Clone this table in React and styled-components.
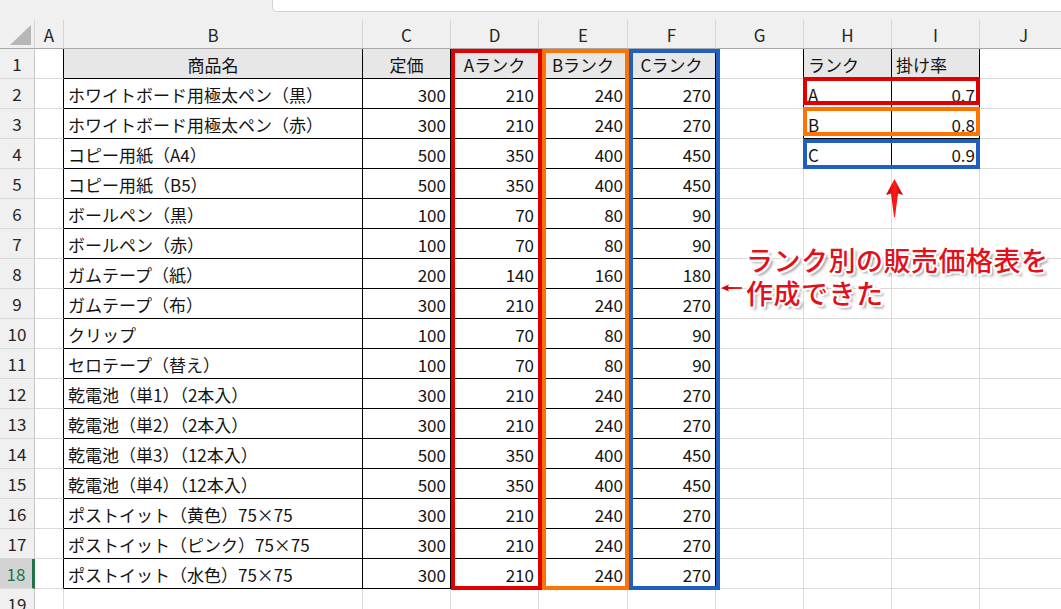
import React from 'react';
import styled, { createGlobalStyle } from 'styled-components';

const Global = createGlobalStyle`
  html, body { margin: 0; padding: 0; background: #fff; overflow: hidden; }
  body { font-family: "Noto Sans CJK JP", "Noto Sans", sans-serif; }
`;

const COLS = [29, 299, 88, 88, 89, 88, 88, 88, 88, 88];
const LETTERS = ['A', 'B', 'C', 'D', 'E', 'F', 'G', 'H', 'I', 'J'];

const ITEMS = [
  ['ホワイトボード用極太ペン（黒）', 300, 210, 240, 270],
  ['ホワイトボード用極太ペン（赤）', 300, 210, 240, 270],
  ['コピー用紙（A4）', 500, 350, 400, 450],
  ['コピー用紙（B5）', 500, 350, 400, 450],
  ['ボールペン（黒）', 100, 70, 80, 90],
  ['ボールペン（赤）', 100, 70, 80, 90],
  ['ガムテープ（紙）', 200, 140, 160, 180],
  ['ガムテープ（布）', 300, 210, 240, 270],
  ['クリップ', 100, 70, 80, 90],
  ['セロテープ（替え）', 100, 70, 80, 90],
  ['乾電池（単1）（2本入）', 300, 210, 240, 270],
  ['乾電池（単2）（2本入）', 300, 210, 240, 270],
  ['乾電池（単3）（12本入）', 500, 350, 400, 450],
  ['乾電池（単4）（12本入）', 500, 350, 400, 450],
  ['ポストイット（黄色）75×75', 300, 210, 240, 270],
  ['ポストイット（ピンク）75×75', 300, 210, 240, 270],
  ['ポストイット（水色）75×75', 300, 210, 240, 270],
];

const RATES = [['A', '0.7'], ['B', '0.8'], ['C', '0.9']];

const Page = styled.div`
  position: relative;
  width: 1061px;
  height: 609px;
  overflow: hidden;
  background: #fff;
`;

const TopBar = styled.div`
  height: 20px;
  background: #f0f0f0;
  display: flex;
  justify-content: flex-end;
  align-items: flex-start;
`;

const FormulaBox = styled.div`
  width: 789px;
  height: 12px;
  box-sizing: border-box;
  background: #fff;
  border-left: 1px solid #d2d2d2;
  border-bottom: 1px solid #d2d2d2;
  border-bottom-left-radius: 5px;
`;

const Grid = styled.div`
  display: grid;
  grid-template-columns: 35px ${COLS.map((c) => c + 'px').join(' ')};
  grid-template-rows: 29px repeat(19, 30px);
  font-size: 17px;
  color: #141414;
`;

const Corner = styled.div`
  background: #f0f0f0;
  border-right: 1px solid #d6d6d6;
  border-bottom: 1px solid #a8a8a8;
  display: flex;
  justify-content: flex-end;
  align-items: flex-end;
  padding: 0 3px 3px 0;
`;

const CornerTriangle = styled.div`
  width: 21px;
  height: 20px;
  background: #b7b7b7;
  clip-path: polygon(100% 0, 100% 100%, 0 100%);
`;

const ColHeader = styled.div`
  background: #f0f0f0;
  border-right: 1px solid #d6d6d6;
  border-bottom: 1px solid #a8a8a8;
  display: flex;
  align-items: center;
  justify-content: center;
  color: #262626;
`;

const RowHeader = styled.div`
  background: ${(p) => (p.$selected ? '#d3d3d3' : '#f0f0f0')};
  border-right: ${(p) => (p.$selected ? '3px solid #217346' : '1px solid #c8c8c8')};
  border-bottom: 1px solid #d8d8d8;
  display: flex;
  align-items: center;
  justify-content: center;
  color: ${(p) => (p.$selected ? '#217346' : '#262626')};
`;

const Cell = styled.div`
  background: ${(p) => (p.$head ? '#e7e7e7' : '#fff')};
  border-right: 1px solid ${(p) => (p.$rightDark ? '#000' : '#dadada')};
  border-bottom: 1px solid ${(p) => (p.$bottomDark ? '#000' : '#dadada')};
  display: flex;
  align-items: center;
  justify-content: ${(p) =>
    p.$align === 'right' ? 'flex-end' : p.$align === 'center' ? 'center' : 'flex-start'};
  padding: 1px 4px 0 4px;
  white-space: nowrap;
  overflow: hidden;
`;

const RankBox = styled.div`
  position: absolute;
  left: ${(p) => p.$x}px;
  top: ${(p) => p.$y}px;
  width: ${(p) => p.$w}px;
  height: ${(p) => p.$h}px;
  box-sizing: border-box;
  border: 4px solid ${(p) => p.$color};
  pointer-events: none;
`;

const Note = styled.div`
  position: absolute;
  left: 746px;
  top: 243px;
  font-size: 27px;
  line-height: 33px;
  letter-spacing: 0.5px;
  font-weight: 500;
  color: #e3101c;
  text-shadow: 2px 0 #fff, -2px 0 #fff, 0 2px #fff, 0 -2px #fff,
    1.5px 1.5px #fff, -1.5px -1.5px #fff, 1.5px -1.5px #fff, -1.5px 1.5px #fff,
    3px 3px 3px rgba(0, 0, 0, 0.45);
  white-space: nowrap;
`;

const ArrowSvg = styled.svg`
  position: absolute;
  left: ${(p) => p.$x}px;
  top: ${(p) => p.$y}px;
  overflow: visible;
`;

const RED = '#e00000';
const ORANGE = '#ff7300';
const BLUE = '#1f5fbf';

function cellFor(r, c) {
  const inT1 = r >= 1 && r <= 18 && c >= 1 && c <= 5;
  const inT2 = r >= 1 && r <= 4 && c >= 7 && c <= 8;
  const props = {
    $rightDark: inT1 || inT2 || (c === 0 && r <= 18) || (c === 6 && r <= 4),
    $bottomDark: inT1 || inT2,
    $head: r === 1 && (inT1 || inT2),
    $align: 'left',
  };
  let text = '';
  if (r === 1) {
    const hdr = ['', '商品名', '定価', 'Aランク', 'Bランク', 'Cランク', '', 'ランク', '掛け率', ''];
    text = hdr[c];
    if (c >= 1 && c <= 5) props.$align = 'center';
  } else if (r >= 2 && r <= 18) {
    const item = ITEMS[r - 2];
    if (c >= 1 && c <= 5) {
      text = String(item[c - 1]);
      props.$align = c === 1 ? 'left' : 'right';
    }
  }
  if (r >= 2 && r <= 4 && (c === 7 || c === 8)) {
    text = RATES[r - 2][c - 7];
    props.$align = c === 7 ? 'left' : 'right';
  }
  return { props, text };
}

export default function App() {
  const rows = [];
  for (let r = 1; r <= 19; r++) {
    rows.push(
      <RowHeader key={'rh' + r} $selected={r === 18}>
        {r}
      </RowHeader>
    );
    for (let c = 0; c < 10; c++) {
      const { props, text } = cellFor(r, c);
      rows.push(
        <Cell key={r + '-' + c} {...props}>
          {text}
        </Cell>
      );
    }
  }

  return (
    <Page>
      <Global />
      <TopBar>
        <FormulaBox />
      </TopBar>
      <Grid>
        <Corner>
          <CornerTriangle />
        </Corner>
        {LETTERS.map((l) => (
          <ColHeader key={l}>{l}</ColHeader>
        ))}
        {rows}
      </Grid>

      <RankBox $x={451} $y={49} $w={91} $h={541} $color={RED} />
      <RankBox $x={542} $y={49} $w={87} $h={541} $color={ORANGE} />
      <RankBox $x={629} $y={49} $w={91} $h={541} $color={BLUE} />

      <RankBox $x={803} $y={77} $w={177} $h={28} $color={RED} />
      <RankBox $x={803} $y={107} $w={177} $h={29} $color={ORANGE} />
      <RankBox $x={803} $y={139} $w={177} $h={30} $color={BLUE} />

      <ArrowSvg $x={886} $y={179} width="18" height="38" viewBox="0 0 18 38">
        <defs>
          <linearGradient id="upg" x1="0" y1="0" x2="1" y2="0">
            <stop offset="0" stopColor="#b80000" />
            <stop offset="0.5" stopColor="#ff1a1a" />
            <stop offset="1" stopColor="#c00000" />
          </linearGradient>
        </defs>
        <polygon points="8.5,0 17,16 12,14.5 9,38 8,38 5,14.5 0,16" fill="url(#upg)" />
      </ArrowSvg>

      <ArrowSvg $x={721} $y={283} width="22" height="10" viewBox="0 0 22 10">
        <polygon points="0,5 8,1.5 7,4 21,4.3 21,5.7 7,6 8,8.5" fill="#e00000" />
      </ArrowSvg>

      <Note>
        ランク別の販売価格表を
        <br />
        作成できた
      </Note>
    </Page>
  );
}
